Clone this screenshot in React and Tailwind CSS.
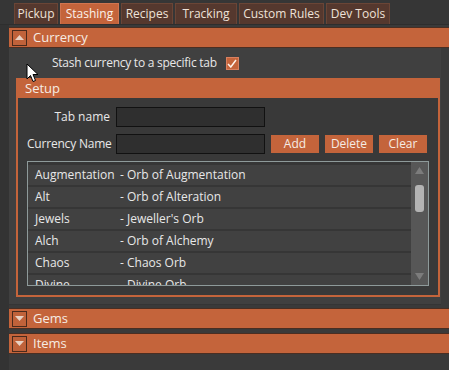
import React from 'react';

const tabs = [
  { label: 'Pickup', w: 'w-[44px]' },
  { label: 'Stashing', w: 'w-[59px]', active: true },
  { label: 'Recipes', w: 'w-[52px]' },
  { label: 'Tracking', w: 'w-[62px]' },
  { label: 'Custom Rules', w: 'w-[85px]' },
  { label: 'Dev Tools', w: 'w-[64px]' },
];

const currencies = [
  ['Augmentation', '- Orb of Augmentation'],
  ['Alt', '- Orb of Alteration'],
  ['Jewels', "- Jeweller's Orb"],
  ['Alch', '- Orb of Alchemy'],
  ['Chaos', '- Chaos Orb'],
  ['Divine', '- Divine Orb'],
];

function Toggle({ open }) {
  return (
    <div className="w-[15px] h-[16px] border border-[#4a2a1c] bg-[#c0623a] flex justify-center pt-[4px]">
      <svg width="9" height="5" viewBox="0 0 9 5">
        {open ? (
          <polygon points="0,5 9,5 4.5,0" fill="#e9d2c4" />
        ) : (
          <polygon points="0,0 9,0 4.5,5" fill="#e9d2c4" />
        )}
      </svg>
    </div>
  );
}

function Expander({ title, open }) {
  return (
    <div className="h-[21px] bg-[#c4643b] border-y border-[#4a2e22] flex items-center pl-[3px] gap-[6px]">
      <Toggle open={open} />
      <span className="text-[13px] text-[#f6ece4] leading-none">{title}</span>
    </div>
  );
}

function Btn({ children, w }) {
  return (
    <div className={`${w} h-[18px] bg-[#c4643b] text-[#f6ece4] text-[12px] flex items-center justify-center`}>
      {children}
    </div>
  );
}

export default function App() {
  return (
    <div
      className="relative w-[449px] h-[370px] overflow-hidden bg-[#3a3a3a] text-[#e8e8e8]"
      style={{ fontFamily: '"Open Sans", "Noto Sans", sans-serif' }}
    >
      {/* tab bar */}
      <div className="h-[25px] flex items-end pl-[14px] gap-[2px] bg-[#363636] border-b border-[#2e2e2e]">
        {tabs.map((t) => (
          <div
            key={t.label}
            className={`${t.w} h-[21px] flex items-center justify-center text-[12px] border border-b-0 ${
              t.active
                ? 'bg-[#c4643b] border-[#d07550] text-[#fbf2ea]'
                : 'bg-[#55382e] border-[#6a4536] text-[#eee2d8]'
            }`}
          >
            {t.label}
          </div>
        ))}
      </div>

      <div className="flex">
        <div className="w-[10px] h-[345px] bg-[#333333]" />
        <div className="flex-1 flex flex-col pt-[2px]">
          <Expander title="Currency" open />

          {/* currency content */}
          <div className="mr-[8px] bg-[#404040] pl-[7px] pr-[1px] pt-[8px] pb-[7px] border-b border-[#353535]">
            <div className="flex items-center pl-[36px] gap-[9px] h-[14px]">
              <span className="text-[12px] leading-none tracking-[-0.25px] whitespace-nowrap">
                Stash currency to a specific tab
              </span>
              <div className="w-[13px] h-[13px] bg-[#c4643b] border border-[#d98060] flex items-center justify-center">
                <svg width="10" height="9" viewBox="0 0 10 9">
                  <path d="M1 5 L3.8 8 L9 1" fill="none" stroke="#fff4ec" strokeWidth="1.5" />
                </svg>
              </div>
            </div>

            {/* setup group */}
            <div className="mt-[8px] border-2 border-t-0 border-[#c4643b] bg-[#393939]">
              <div className="h-[20px] bg-[#c4643b] flex items-center pl-[7px]">
                <span className="text-[13px] text-[#f6ece4] leading-none">Setup</span>
              </div>
              <div className="pl-[9px] pr-[9px] pt-[9px] pb-[9px] flex flex-col">
                <div className="flex items-center h-[20px]">
                  <span className="w-[83px] text-right text-[12px] whitespace-nowrap">Tab name</span>
                  <div className="ml-[6px] w-[149px] h-[20px] bg-[#2f2f2f] border border-[#111111]" />
                </div>
                <div className="flex items-center h-[20px] mt-[7px]">
                  <span className="w-[83px] text-right text-[12px] whitespace-nowrap tracking-[-0.2px]">
                    Currency Name
                  </span>
                  <div className="ml-[6px] w-[149px] h-[20px] bg-[#2f2f2f] border border-[#111111]" />
                  <div className="ml-[6px] flex gap-[6px]">
                    <Btn w="w-[48px]">Add</Btn>
                    <Btn w="w-[48px]">Delete</Btn>
                    <Btn w="w-[48px]">Clear</Btn>
                  </div>
                </div>

                {/* list */}
                <div className="mt-[7px] w-[402px] h-[125px] border border-[#8e9a9a] bg-[#363636] flex overflow-hidden">
                  <div className="flex-1 pt-[3px] flex flex-col gap-[2px]">
                    {currencies.map(([a, b]) => (
                      <div key={a} className="h-[20px] shrink-0 bg-[#414141] flex items-center text-[12px]">
                        <span className="w-[92px] pl-[7px] whitespace-nowrap">{a}</span>
                        <span className="whitespace-nowrap">{b}</span>
                      </div>
                    ))}
                  </div>
                  <div className="w-[17px] bg-[#575757] flex flex-col items-center justify-between py-[5px]">
                    <div className="flex flex-col items-center gap-[11px]">
                      <svg width="9" height="7" viewBox="0 0 9 7">
                        <polygon points="0,7 9,7 4.5,0" fill="#7c7c7c" />
                      </svg>
                      <div className="w-[9px] h-[27px] rounded-[3px] bg-[#b3b3b3]" />
                    </div>
                    <svg width="9" height="7" viewBox="0 0 9 7">
                      <polygon points="0,0 9,0 4.5,7" fill="#7c7c7c" />
                    </svg>
                  </div>
                </div>
              </div>
            </div>
          </div>

          <div className="mt-[3px]">
            <Expander title="Gems" />
          </div>
          <div className="mt-[4px]">
            <Expander title="Items" />
          </div>
        </div>
      </div>

      {/* mouse cursor */}
      <svg className="absolute left-[26px] top-[63px]" width="13" height="20" viewBox="0 0 13 20">
        <path d="M1 1 L1 16 L4.5 12.5 L7 18.5 L9.5 17.5 L7 11.5 L12 11.5 Z" fill="#ffffff" stroke="#000000" strokeWidth="1" />
      </svg>
    </div>
  );
}
